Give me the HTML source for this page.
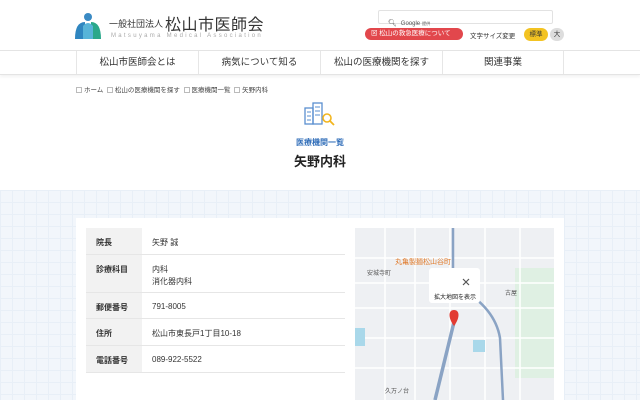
<!DOCTYPE html>
<html><head><meta charset="utf-8"><style>
*{margin:0;padding:0;box-sizing:border-box}
body{width:640px;height:400px;overflow:hidden;font-family:"Liberation Sans","Noto Sans CJK JP",sans-serif;background:#fff;position:relative;color:#333}
.abs{position:absolute}
.nav{top:50px;left:0;width:640px;height:25px;border-top:1px solid #e4e4e4;border-bottom:1px solid #e4e4e4;box-shadow:0 2px 3px rgba(0,0,0,.05);display:flex;padding-left:76px}
.nav div{width:122px;text-align:center;font-size:9.5px;line-height:23px;border-left:1px solid #e6e6e6}
.nav div:last-child{border-right:1px solid #e6e6e6}
.bg{top:190px;left:0;width:640px;height:210px;background-color:#f2f6fb;background-image:linear-gradient(#e8eff7 1px,transparent 1px),linear-gradient(90deg,#e8eff7 1px,transparent 1px);background-size:12px 12px}
.card{top:218px;left:76px;width:488px;height:182px;background:#fff}
table{position:absolute;top:228px;left:86px;width:259px;border-collapse:collapse;font-size:8px}
td{border-bottom:1px solid #e6e6e6;padding:0 10px;vertical-align:top}
td.l{background:#f2f2f2;width:56px;font-weight:bold;padding-left:10px}
.bc{top:84px;left:76px;font-size:6.5px;color:#444}
.bc span{display:inline-block;width:6px;height:6px;border:1px solid #bbb;margin:0 2px 0 0;vertical-align:-1px}
</style></head><body>
<svg class="abs" style="left:73px;top:12px" width="30" height="28" viewBox="0 0 30 28"><circle cx="15" cy="5" r="4" fill="#3a8ac4"/><path d="M2 27 Q2 10 12 10 L12 27Z" fill="#2f86c0"/><path d="M18 27 L18 10 Q28 10 28 27Z" fill="#2aa88a"/><path d="M10 14 Q15 8 20 14 L20 27 L10 27Z" fill="#57b4d8"/></svg>
<div class="abs" style="left:109px;top:17px;font-size:9px">一般社団法人</div>
<div class="abs" style="left:165px;top:11px;font-size:16px;letter-spacing:0.5px">松山市医師会</div>
<div class="abs" style="left:111px;top:33px;font-size:6px;letter-spacing:2.3px;color:#aaa">Matsuyama Medical Association</div>
<div class="abs" style="left:378px;top:10px;width:175px;height:14px;border:1px solid #e2e2e2;border-radius:2px"></div>
<div class="abs" style="left:388px;top:19px;font-size:7px;color:#555">🔍︎&nbsp; <span style="font-size:6px">Google</span> <span style="font-size:4px">提供</span></div>
<div class="abs" style="left:365px;top:28px;width:98px;height:12px;background:#e2474c;border-radius:6px;color:#fff;font-size:6.5px;line-height:12px;padding-left:6px">⊠ 松山の救急医療について</div>
<div class="abs" style="left:470px;top:30px;font-size:6.5px">文字サイズ変更</div>
<div class="abs" style="left:524px;top:28px;width:24px;height:13px;background:#f3c322;border-radius:7px;font-size:6.5px;line-height:13px;text-align:center">標準</div>
<div class="abs" style="left:550px;top:28px;width:14px;height:13px;background:#ddd;border-radius:7px;font-size:6.5px;line-height:13px;text-align:center">大</div>
<div class="abs nav"><div>松山市医師会とは</div><div>病気について知る</div><div>松山の医療機関を探す</div><div>関連事業</div></div>
<div class="abs bc"><span></span>ホーム &nbsp;<span></span>松山の医療機関を探す &nbsp;<span></span>医療機関一覧 &nbsp;<span></span>矢野内科</div>
<svg class="abs" style="left:303px;top:102px" width="34" height="24" viewBox="0 0 34 24"><rect x="2" y="6" width="8" height="16" fill="none" stroke="#5a8fd0" stroke-width="1.3"/><rect x="10" y="1" width="9" height="21" fill="none" stroke="#5a8fd0" stroke-width="1.3"/><path d="M4 10h4M4 14h4M4 18h4M12 5h5M12 9h5M12 13h5" stroke="#5a8fd0"/><circle cx="24" cy="16" r="4" fill="none" stroke="#f2b51e" stroke-width="1.6"/><path d="M27 19l4 4" stroke="#f2b51e" stroke-width="1.8"/></svg>
<div class="abs" style="left:0;width:640px;top:137px;text-align:center;font-size:8px;color:#2e6cb8;font-weight:bold">医療機関一覧</div>
<div class="abs" style="left:0;width:640px;top:151px;text-align:center;font-size:13px;font-weight:bold;color:#222">矢野内科</div>
<div class="abs bg"></div>
<div class="abs card"></div>
<table>
<tr style="height:26px"><td class="l" style="padding-top:9px">院長</td><td style="padding-top:9px">矢野 誠</td></tr>
<tr style="height:38px"><td class="l" style="padding-top:9px">診療科目</td><td style="padding-top:9px;line-height:12px">内科<br>消化器内科</td></tr>
<tr style="height:26px"><td class="l" style="padding-top:9px">郵便番号</td><td style="padding-top:9px">791-8005</td></tr>
<tr style="height:27px"><td class="l" style="padding-top:9px">住所</td><td style="padding-top:9px">松山市東長戸1丁目10-18</td></tr>
<tr style="height:27px"><td class="l" style="padding-top:9px">電話番号</td><td style="padding-top:9px">089-922-5522</td></tr>
</table>
<svg class="abs" style="left:355px;top:228px" width="199" height="172" viewBox="0 0 199 172">
<rect width="199" height="172" fill="#eef0f3"/>
<rect x="160" y="40" width="39" height="110" fill="#dff0e3"/>
<path d="M0 30H199M0 55H199M0 80H199M0 110H199M0 140H199M30 0V172M60 0V172M95 0V172M130 0V172M165 0V172" stroke="#fff" stroke-width="1.5"/>
<path d="M100 90 L80 172" stroke="#8aa3c4" stroke-width="3.5"/>
<path d="M105 60 Q140 80 145 110 L148 172" stroke="#8aa3c4" stroke-width="2.5" fill="none"/>
<path d="M98 0V50" stroke="#8aa3c4" stroke-width="2.5"/>
<rect x="0" y="100" width="10" height="18" fill="#a9d8ea"/><rect x="118" y="112" width="12" height="12" fill="#a9d8ea"/>
<text x="40" y="36" font-size="7" fill="#e07a2a" font-family="Noto Sans CJK JP,sans-serif">丸亀製麺松山谷町</text>
<text x="12" y="47" font-size="6" fill="#555" font-family="Noto Sans CJK JP,sans-serif">安城寺町</text>
<text x="150" y="67" font-size="6" fill="#555" font-family="Noto Sans CJK JP,sans-serif">古屋</text>
<text x="30" y="165" font-size="6" fill="#555" font-family="Noto Sans CJK JP,sans-serif">久万ノ台</text>
<rect x="74" y="40" width="51" height="35" rx="3" fill="#fff"/>
<path d="M108 51l6 6M114 51l-6 6" stroke="#555" stroke-width="1.2"/>
<text x="79" y="71" font-size="6" fill="#222" font-family="Noto Sans CJK JP,sans-serif">拡大地図を表示</text>
<path d="M99 98 C93 90 93 82 99 82 C105 82 105 90 99 98Z" fill="#e23b32"/>
</svg>
</body></html>
